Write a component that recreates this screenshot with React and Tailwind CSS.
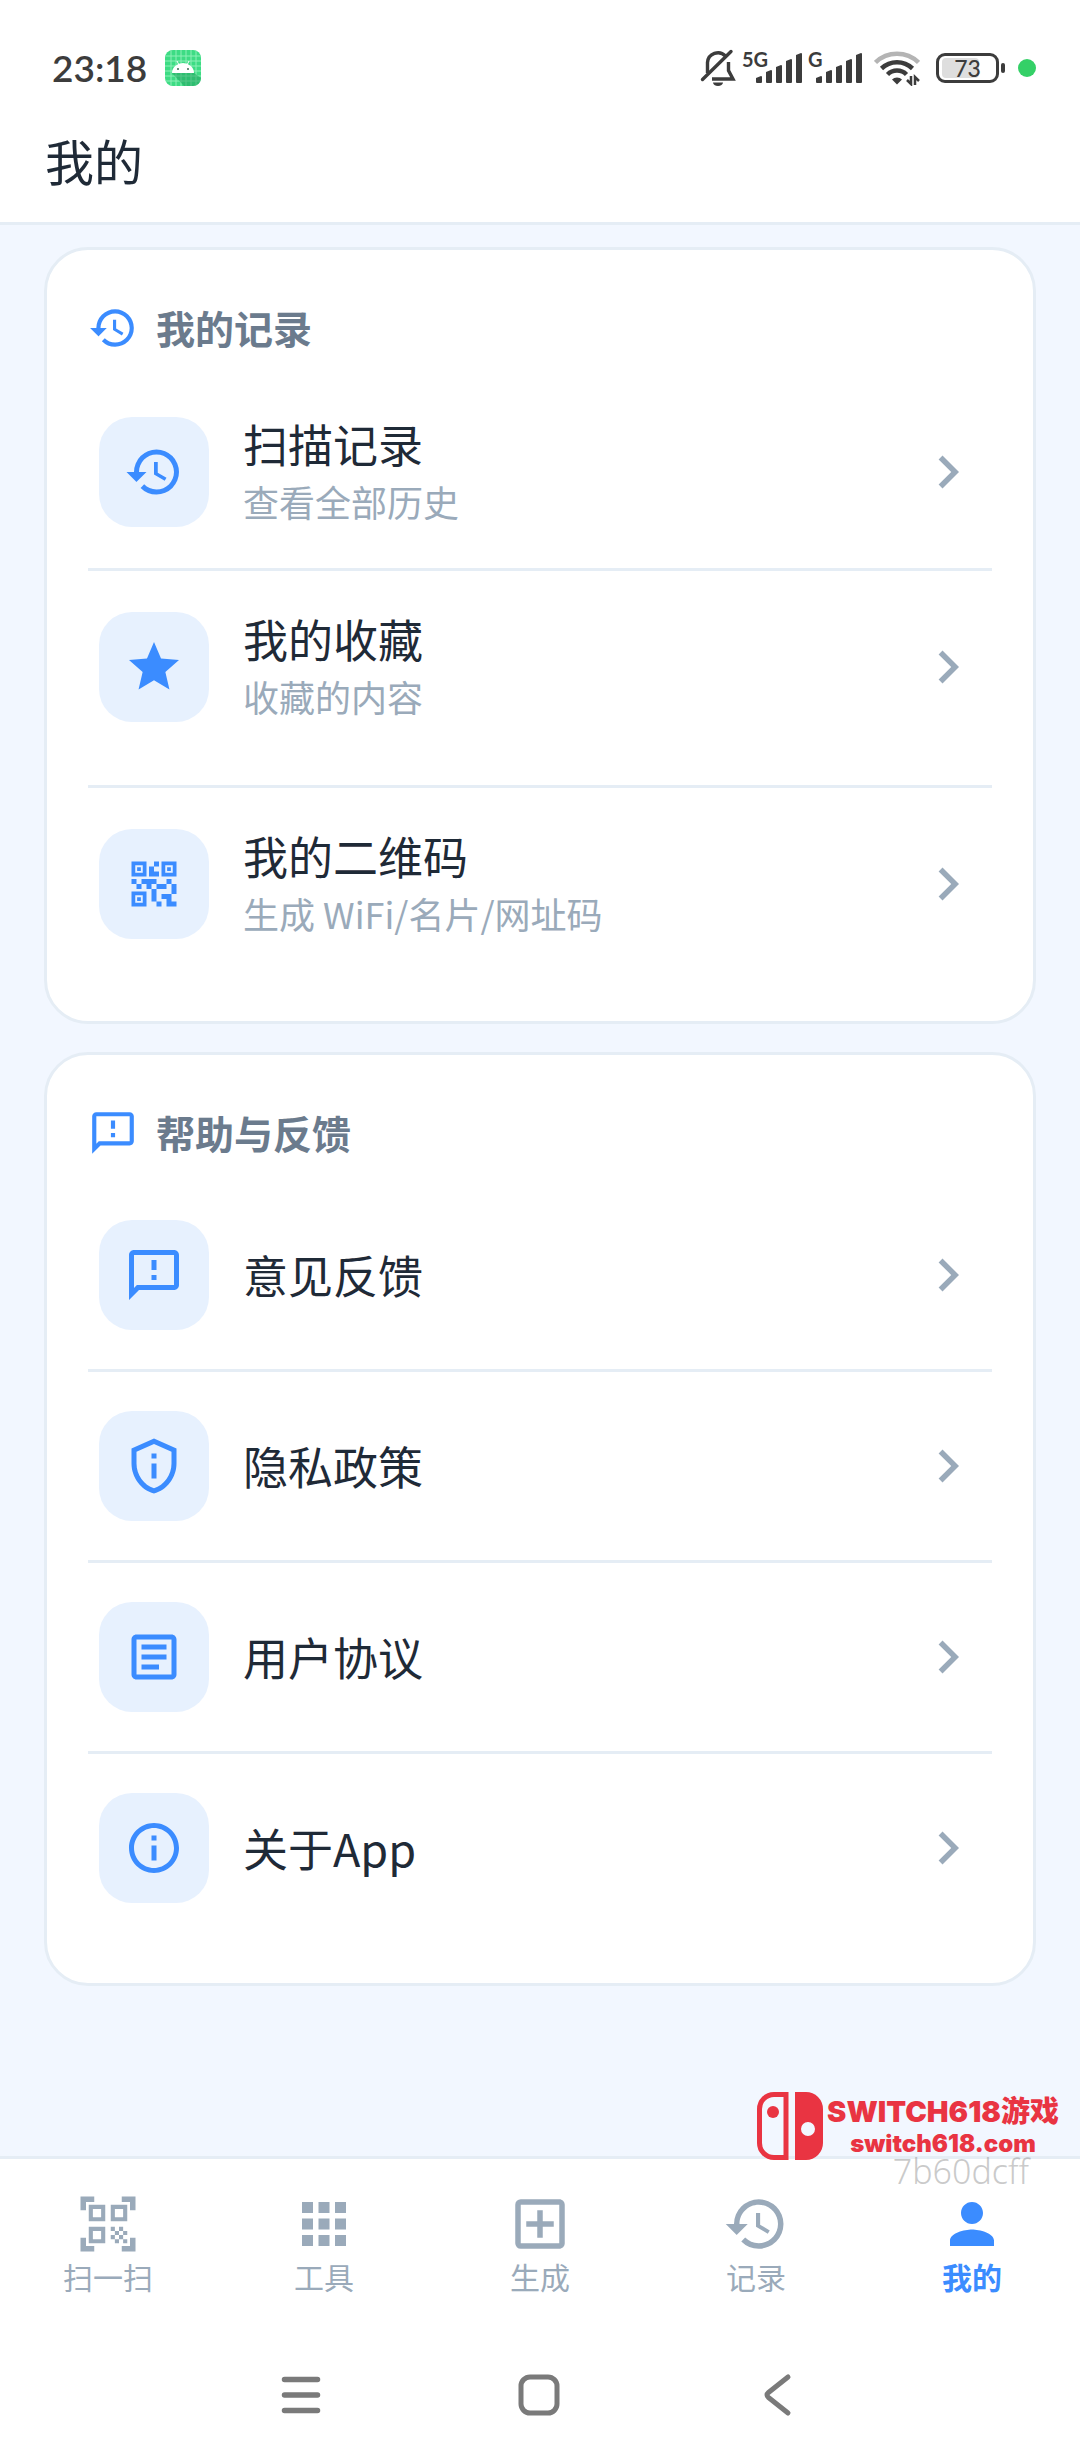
import React, { useState } from 'react';
import {
    MdApps,
    MdChevronRight,
    MdHistory,
    MdOutlineAddBox,
    MdOutlineArticle,
    MdOutlineFeedback,
    MdOutlineInfo,
    MdOutlinePrivacyTip,
    MdPerson,
    MdQrCode2,
    MdQrCodeScanner,
    MdStar,
} from 'react-icons/md';

const SECTIONS = [
    {
        id: 'records',
        title: '我的记录',
        icon: MdHistory,
        items: [
            { title: '扫描记录', subtitle: '查看全部历史', icon: MdHistory },
            { title: '我的收藏', subtitle: '收藏的内容', icon: MdStar, spaced: true },
            { title: '我的二维码', subtitle: '生成 WiFi/名片/网址码', icon: MdQrCode2, spaced: true },
        ],
    },
    {
        id: 'help',
        title: '帮助与反馈',
        icon: MdOutlineFeedback,
        items: [
            { title: '意见反馈', icon: MdOutlineFeedback },
            { title: '隐私政策', icon: MdOutlinePrivacyTip },
            { title: '用户协议', icon: MdOutlineArticle },
            { title: '关于App', icon: MdOutlineInfo, spaced: true },
        ],
    },
];

const TABS = [
    { id: 'scan', label: '扫一扫', icon: MdQrCodeScanner },
    { id: 'tools', label: '工具', icon: MdApps },
    { id: 'create', label: '生成', icon: MdOutlineAddBox },
    { id: 'history', label: '记录', icon: MdHistory },
    { id: 'me', label: '我的', icon: MdPerson },
];

function AndroidBadge() {
    return (
        <svg width="36" height="36" viewBox="0 0 36 36" aria-hidden="true">
            <rect width="36" height="36" rx="8" fill="#3ddc84" />
            <path
                d="M6 1v34M11 0v36M16 0v36M21 0v36M26 0v36M31 1v34M1 6h34M0 11h36M0 16h36M0 21h36M0 26h36M1 31h34"
                stroke="#8df0b7"
                strokeWidth="1"
            />
            <path d="M7 23h22l7 5v1a8 8 0 0 1-8 7h-9z" fill="#1f9d5c" opacity=".5" />
            <path d="M12 11l2 4M24 11l-2 4" stroke="#fff" strokeWidth="1" />
            <path d="M7 23a11 10 0 0 1 22 0z" fill="#fff" />
            <circle cx="13" cy="19" r="1" fill="#3b6b50" />
            <circle cx="23" cy="19" r="1" fill="#3b6b50" />
        </svg>
    );
}

function MutedBell() {
    return (
        <svg width="36" height="40" viewBox="0 0 36 40" fill="none" stroke="#3c3c3c" strokeWidth="3.4" aria-hidden="true">
            <path d="M7.5 25V14.5A10.5 10.5 0 0 1 25.5 8" />
            <path d="M28.5 14v8.5l4.5 8.5H12" />
            <path d="M2.5 31.5L31 3.5" strokeLinecap="round" />
            <path d="M13 34.5h10a5 3.500 0 0 1-10 0z" fill="#3c3c3c" stroke="none" />
        </svg>
    );
}

function Signal({ label }) {
    // the wider "5G" label starts further left of the bars
    const start = label === '5G' ? 15 : 9;
    return (
        <svg width={start + 45} height="52" viewBox={`0 -8 ${start + 45} 52`} fill="#3c3c3c" role="img" aria-label={label}>
            <text x="0" y="17" fontSize="20" fontWeight="700" fontFamily="Lato, sans-serif">{label}</text>
            {[6, 12, 17, 23, 29].map((h, i) => (
                <path
                    key={h}
                    d={`M${start + i * 10 - 1} ${34 - h}l5-2q1 0 1 1v${h - 1}q0 1-1 1h-4q-1 0-1-1z`}
                />
            ))}
        </svg>
    );
}

function Wifi() {
    return (
        <svg width="46" height="36" viewBox="0 0 46 36" fill="none" strokeWidth="4.5" aria-hidden="true">
            <path d="M1.5 12.5a31 31 0 0 1 43 0" stroke="#b4b4b4" />
            <path d="M7.5 18.5a22.5 22.5 0 0 1 31 0" stroke="#3c3c3c" />
            <path d="M13.5 24.5a13.5 13.5 0 0 1 19 0" stroke="#3c3c3c" />
            <path d="M18 29.5a7 7 0 0 1 10 0l-5 5z" fill="#3c3c3c" />
            <path d="M37 26v8l-4-4M41 35v-8l4 4" stroke="#3c3c3c" strokeWidth="2.5" />
        </svg>
    );
}

function Battery({ level }) {
    return (
        <div className="flex items-center gap-[2px]" role="img" aria-label={`${level}%`}>
            <div className="relative flex h-[30px] w-[63px] items-center justify-center rounded-[9px] border-[3px] border-[#3c3c3c] p-[3px]">
                <div className="absolute inset-y-[2px] left-[3px] rounded-[4px] bg-[#dedede]" style={{ width: Math.round(level / 2) }} />
                <span className="relative font-['Lato'] text-[23px] leading-6 font-medium text-[#3c3c3c]">{level}</span>
            </div>
            <div className="h-[10px] w-1 rounded-full bg-[#3c3c3c]" />
        </div>
    );
}

function StatusBar() {
    return (
        <div className="flex h-[136px] items-center justify-between pr-11 pl-[52px]">
            <div className="flex items-center gap-[18px]">
                <time className="font-['Lato'] text-[37px] leading-10 font-semibold text-[#3c3c3c]">23:18</time>
                <AndroidBadge />
            </div>
            <div className="flex items-center">
                <MutedBell />
                <div className="ml-[6px] flex items-center gap-[6px]">
                    <Signal label="5G" />
                    <Signal label="G" />
                </div>
                <div className="mr-4 ml-3">
                    <Wifi />
                </div>
                <Battery level={73} />
                <span className="ml-[13px] size-[18px] rounded-full bg-[#34d067]" />
            </div>
        </div>
    );
}

function MenuItem({ item }) {
    const Icon = item.icon;
    return (
        <li className={item.spaced ? 'pb-[22px]' : ''}>
            <button type="button" className="flex w-full items-center px-[11px] py-[39px] text-left">
                <span className="flex size-[110px] shrink-0 items-center justify-center rounded-[33px] bg-[#e7f1fe] text-[#3b8cff]">
                    <Icon size={60} />
                </span>
                <span className="ml-[34px] flex flex-1 flex-col">
                    <span className="text-[45px] leading-[58px] text-[#1f2a37]">{item.title}</span>
                    {item.subtitle && (
                        <span className="text-[36px] leading-[56px] text-[#9aaaba]">{item.subtitle}</span>
                    )}
                </span>
                <MdChevronRight size={66} className="shrink-0 text-[#9aaaba]" />
            </button>
        </li>
    );
}

function Section({ section }) {
    const Icon = section.icon;
    return (
        <section className="rounded-[44px] border-[3px] border-[#e5edf5] bg-white px-[41px] pb-[19px]">
            <div className="flex h-[126px] items-center gap-[18px] pt-[30px]">
                <Icon size={50} className="text-[#3b8cff]" />
                <h2 className="pb-[2px] text-[39px] leading-[52px] font-bold text-[#6b7b8d]">{section.title}</h2>
            </div>
            <ul className="divide-y-[3px] divide-[#e5edf5]">
                {section.items.map((item) => (
                    <MenuItem key={item.title} item={item} />
                ))}
            </ul>
        </section>
    );
}

function Watermark() {
    return (
        <div className="pointer-events-none absolute right-5 bottom-[274px] flex gap-[3px] text-[#e93442]">
            <svg width="66" height="68" viewBox="0 0 66 68" aria-hidden="true">
                <path d="M17 2.500h12v63H17A14.500 14.500 0 0 1 2.500 51V17A14.500 14.500 0 0 1 17 2.500z" fill="none" stroke="currentColor" strokeWidth="5" />
                <circle cx="16" cy="20" r="6" fill="currentColor" />
                <path fillRule="evenodd" d="M38 0h11a17 17 0 0 1 17 17v34a17 17 0 0 1-17 17H38zM51 30a7 7 0 1 0 0 14a7 7 0 0 0 0-14z" fill="currentColor" />
            </svg>
            <div className="flex w-[234px] flex-col items-center font-['Inter','Noto_Sans_CJK_SC',sans-serif] font-black">
                <span className="text-[29px] leading-10 whitespace-nowrap">SWITCH618游戏</span>
                <span className="text-[24px] leading-6 whitespace-nowrap">switch618.com</span>
                <span className="mr-[31px] self-end font-['Noto_Sans'] text-[34px] leading-[30px] font-light text-[#969696]/50">7b60dcff</span>
            </div>
        </div>
    );
}

function TabBar({ active, onChange }) {
    return (
        <nav className="flex h-[174px] border-t-[3px] border-[#e5edf5] pt-8">
            {TABS.map(({ id, label, icon: Icon }) => (
                <button
                    key={id}
                    type="button"
                    onClick={() => onChange(id)}
                    aria-current={active === id ? 'page' : undefined}
                    className={`flex flex-1 flex-col items-center ${active === id ? 'font-bold text-[#3b8cff]' : 'text-[#9aaaba]'}`}
                >
                    <Icon size={66} />
                    <span className="text-[30px] leading-[38px]">{label}</span>
                </button>
            ))}
        </nav>
    );
}

function SystemNav() {
    return (
        <div className="flex h-[130px] items-center justify-center gap-[194px] pr-[2px] text-[#7a7a7a]">
            <button type="button" aria-label="最近任务">
                <svg width="44" height="44" viewBox="0 0 44 44" stroke="currentColor" strokeWidth="5.5" strokeLinecap="round">
                    <path d="M5.5 6.5h33M5.5 22h33M5.5 37.5h33" />
                </svg>
            </button>
            <button type="button" aria-label="主屏幕">
                <svg width="44" height="44" viewBox="0 0 44 44" fill="none" stroke="currentColor" strokeWidth="5">
                    <rect x="4" y="4" width="36" height="36" rx="9" />
                </svg>
            </button>
            <button type="button" aria-label="返回">
                <svg width="44" height="44" viewBox="0 0 44 44" fill="none" stroke="currentColor" strokeWidth="5" strokeLinecap="round">
                    <path d="M33 4L13.5 19.5q-3 2.500 0 5L33 40" />
                </svg>
            </button>
        </div>
    );
}

export default function App() {
    const [tab, setTab] = useState('me');

    return (
        <div className="flex min-h-screen flex-col bg-[#f2f7ff] font-['Noto_Sans_CJK_SC',sans-serif]">
            <header className="border-b-[3px] border-[#e5edf5] bg-white">
                <StatusBar />
                <h1 className="px-[45px] pb-[38px] text-[49px] leading-[48px] text-[#1f2a37]">我的</h1>
            </header>

            <main className="flex flex-1 flex-col gap-7 px-11 py-[22px]">
                {SECTIONS.map((section) => (
                    <Section key={section.id} section={section} />
                ))}
            </main>

            <footer className="relative bg-white">
                <TabBar active={tab} onChange={setTab} />
                <SystemNav />
                <Watermark />
            </footer>
        </div>
    );
}
